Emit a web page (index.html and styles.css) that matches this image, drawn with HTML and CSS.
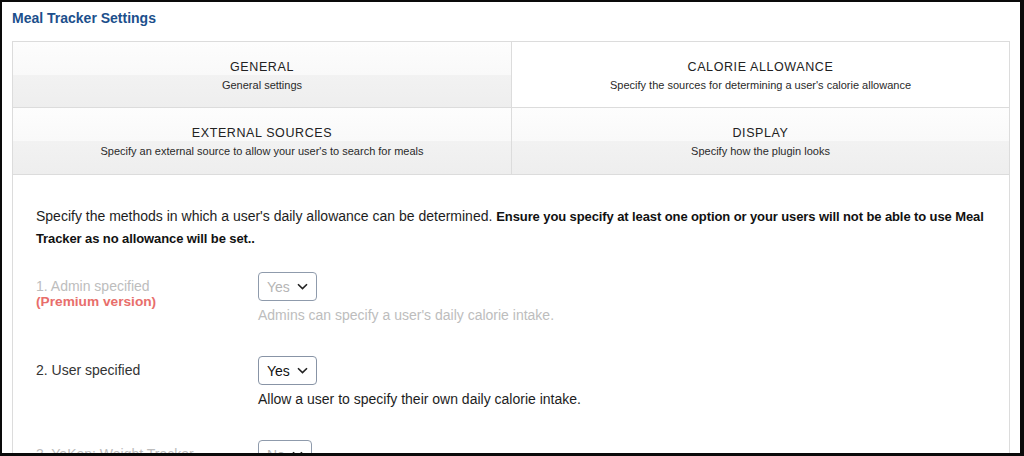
FILE: index.html
```html
<!DOCTYPE html>
<html>
<head>
<meta charset="utf-8">
<link rel="stylesheet" href="styles.css">
</head>
<body>
<div class="frame">
  <h1 class="page-title">Meal Tracker Settings</h1>
  <div class="panel">
    <div class="tabs">
      <div class="tab">
        <div class="tab-title">GENERAL</div>
        <div class="tab-sub">General settings</div>
      </div>
      <div class="tab active">
        <div class="tab-title">CALORIE ALLOWANCE</div>
        <div class="tab-sub">Specify the sources for determining a user's calorie allowance</div>
      </div>
      <div class="tab">
        <div class="tab-title">EXTERNAL SOURCES</div>
        <div class="tab-sub">Specify an external source to allow your user's to search for meals</div>
      </div>
      <div class="tab">
        <div class="tab-title">DISPLAY</div>
        <div class="tab-sub">Specify how the plugin looks</div>
      </div>
    </div>
    <div class="content">
      <p class="intro">Specify the methods in which a user's daily allowance can be determined. <strong>Ensure you specify at least one option or your users will not be able to use Meal Tracker as no allowance will be set..</strong></p>

      <div class="option disabled">
        <div class="label"><div>1. Admin specified</div><div class="premium">(Premium version)</div></div>
        <div class="field">
          <div class="select"><span>Yes</span><svg class="chev" width="11" height="7" viewBox="0 0 11 7"><path d="M1 1.2 L5.5 5.6 L10 1.2" fill="none" stroke="#222" stroke-width="1.6"/></svg></div>
          <div class="desc">Admins can specify a user's daily calorie intake.</div>
        </div>
      </div>

      <div class="option">
        <div class="label"><div>2. User specified</div></div>
        <div class="field">
          <div class="select"><span>Yes</span><svg class="chev" width="11" height="7" viewBox="0 0 11 7"><path d="M1 1.2 L5.5 5.6 L10 1.2" fill="none" stroke="#222" stroke-width="1.6"/></svg></div>
          <div class="desc">Allow a user to specify their own daily calorie intake.</div>
        </div>
      </div>

      <div class="option disabled">
        <div class="label"><div>3. YeKen: Weight Tracker</div></div>
        <div class="field">
          <div class="select"><span>No</span><svg class="chev" width="11" height="7" viewBox="0 0 11 7"><path d="M1 1.2 L5.5 5.6 L10 1.2" fill="none" stroke="#222" stroke-width="1.6"/></svg></div>
        </div>
      </div>
    </div>
  </div>
</div>
</body>
</html>
```

FILE: styles.css
```css
* { box-sizing: border-box; }
html, body { margin: 0; padding: 0; background: #fff; }
body { font-family: "Liberation Sans", Arial, sans-serif; color: #1d1d1d; }

.frame {
  width: 1024px;
  height: 456px;
  overflow: hidden;
  border-style: solid;
  border-color: #0a0a0a;
  border-width: 2px 4px 3px 2px;
  padding: 0 10px 0 10px;
  background: #fff;
}

.page-title {
  margin: 0;
  height: 39px;
  padding-top: 7px;
  font-size: 14px;
  line-height: 18px;
  font-weight: bold;
  color: #1c4f8c;
}

.panel {
  border: 1px solid #dcdcdc;
  width: 998px;
}

.tabs {
  display: grid;
  grid-template-columns: 499px 1fr;
  grid-auto-rows: 66px;
  border-bottom: 1px solid #dcdcdc;
}
.tab {
  text-align: center;
  padding-top: 16px;
  background: linear-gradient(#fdfdfd 0%, #f9f9f9 50%, #f2f2f2 50%, #eeeeee 100%);
}
.tab:nth-child(odd) { border-right: 1px solid #dcdcdc; }
.tab:nth-child(-n+2) { border-bottom: 1px solid #dcdcdc; }
.tab.active { background: #fff; }
.tab-title {
  font-size: 12.5px;
  line-height: 18px;
  letter-spacing: 0.6px;
  color: #222;
}
.tab-sub {
  font-size: 11px;
  line-height: 18px;
  color: #2a2a2a;
}

.content {
  padding: 30px 14px 0 23px;
}
.intro {
  margin: 0 0 23px;
  font-size: 14px;
  line-height: 22px;
  color: #1d1d1d;
}
.intro strong {
  color: #111;
  font-size: 13px;
  line-height: 14px;
  letter-spacing: -0.1px;
}

.option {
  display: grid;
  grid-template-columns: 222px 1fr;
  margin-bottom: 30px;
  font-size: 14px;
}
.label {
  padding-top: 4px;
  line-height: 20px;
  color: #333;
}
.premium {
  display: block;
  color: #e86e6b;
  font-weight: bold;
  font-size: 13.7px;
  line-height: 16px;
  margin-top: -2px;
}
.disabled .label { color: #bdbdbd; }

.select {
  display: inline-flex;
  align-items: center;
  height: 29px;
  padding: 0 8px 0 8px;
  border: 1px solid #8894a6;
  border-radius: 4px;
  font-size: 14px;
  color: #111;
  background: #fff;
}
.select span { margin-right: 7px; }
.disabled .select { color: #b5b5b5; border-color: #8f9bac; }
.chev { display: block; }

.desc {
  margin-top: 3px;
  line-height: 22px;
  color: #1d1d1d;
}
.disabled .desc { color: #bdbdbd; }
```
